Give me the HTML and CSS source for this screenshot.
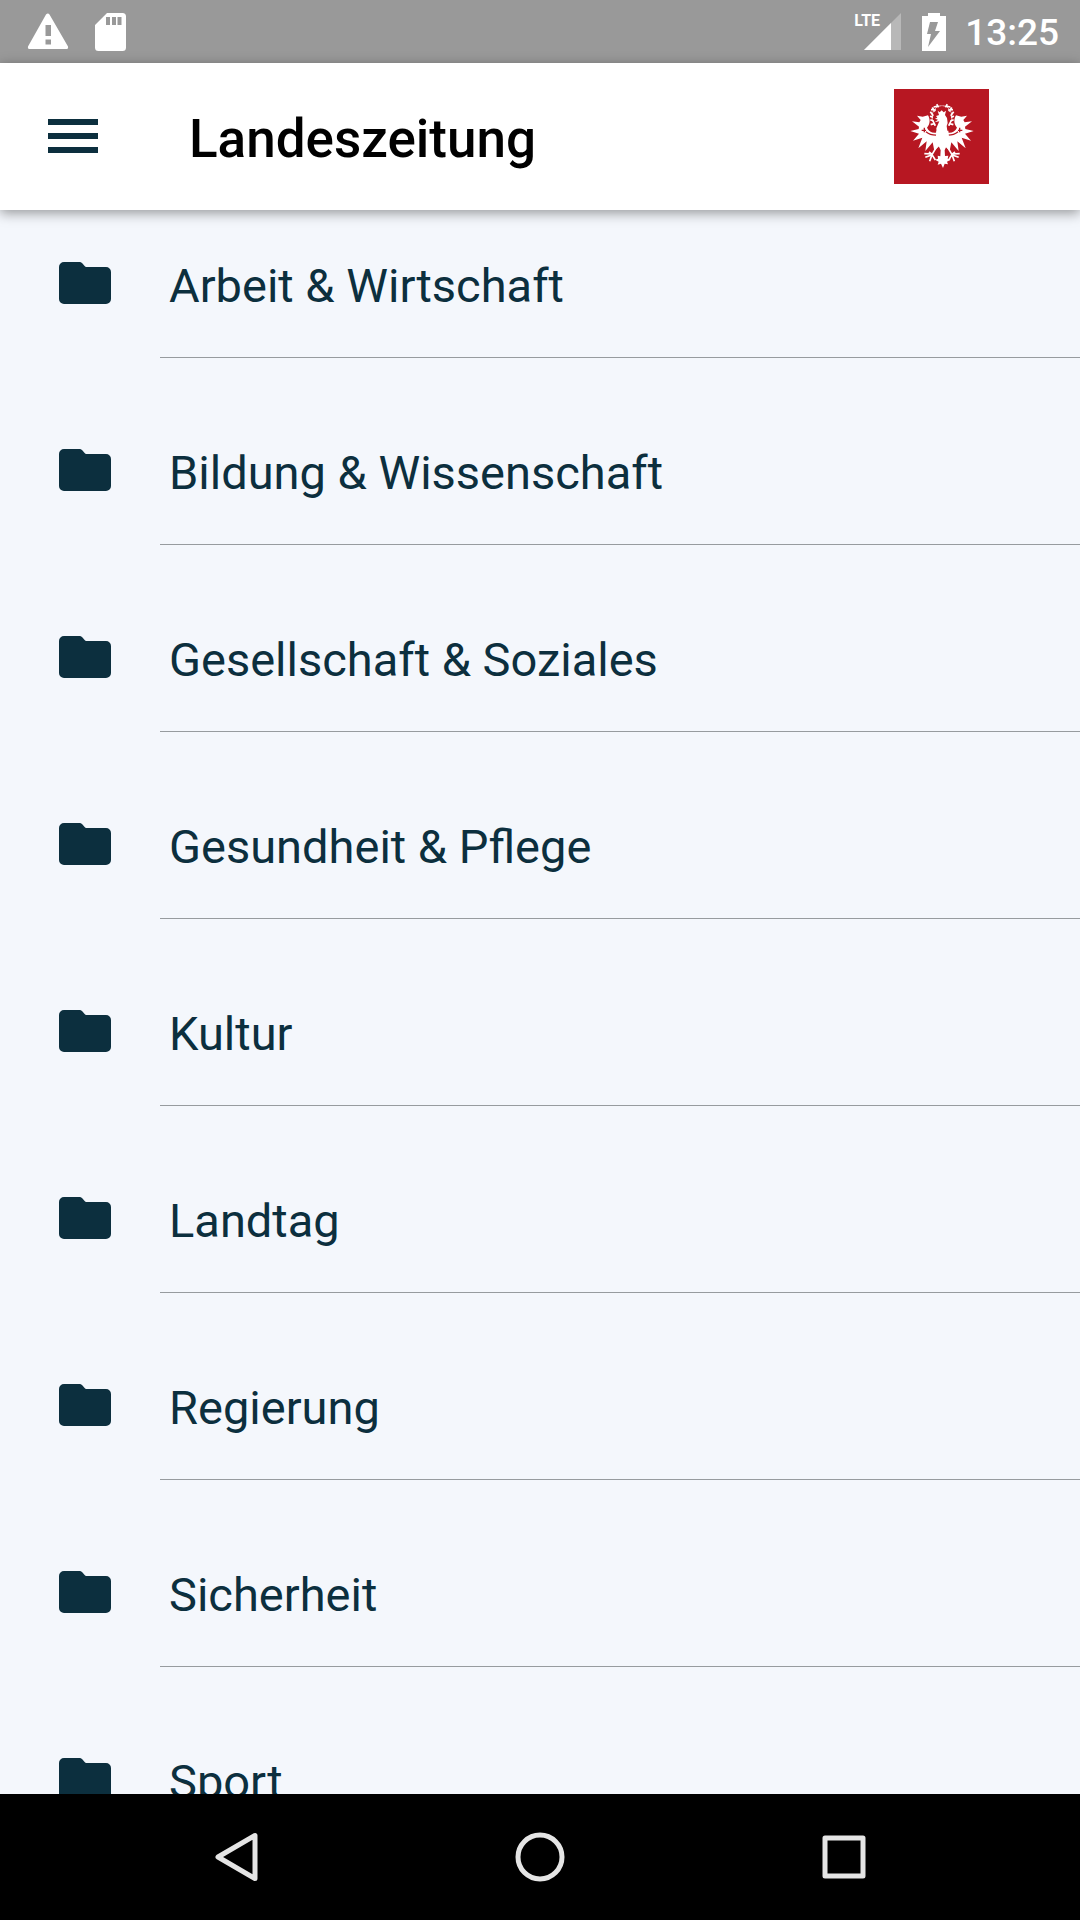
FILE: index.html
```html
<!DOCTYPE html>
<html lang="de">
<head>
    <meta charset="UTF-8">
    <meta name="viewport" content="width=device-width, initial-scale=1.0">
    <title>Landeszeitung</title>
    <link rel="stylesheet" href="styles.css">
</head>
<body>
    <!-- shared folder icon -->
    <svg class="sprite" aria-hidden="true">
        <symbol id="folder" viewBox="0 0 52 42">
            <path d="M5 0h16c2 0 5 5 6 5h20a5 5 0 0 1 5 5v27a5 5 0 0 1-5 5H5a5 5 0 0 1-5-5V5a5 5 0 0 1 5-5z"/>
        </symbol>
    </svg>

    <div class="status-bar">
        <svg class="status-icon" width="42" height="38" viewBox="0 0 42 38" aria-hidden="true">
            <path fill="#fff" fill-rule="evenodd" d="M19 1.500Q21 -.5 22.500 1.500L41 33.500Q41.500 36 39.500 36H2.500Q.5 36 1 33.500zM18.500 12v11h5.500V12zM18.500 26.500v5h5.500v-5z"/>
        </svg>
        <svg class="status-icon sd" width="32" height="38" viewBox="0 0 32 38" aria-hidden="true">
            <path fill="#fff" fill-rule="evenodd" d="M12 0h15.500a3.500 3.500 0 0 1 3.500 3.500v31a3.500 3.500 0 0 1-3.500 3.500h-24A3.500 3.500 0 0 1 0 34.500V12zM11 4v8h4V4zM17 4v8h4V4zM22.500 4v8h4V4z"/>
        </svg>
        <div class="status-right">
            <div class="signal">
                <span class="lte">LTE</span>
                <svg width="37" height="37" viewBox="0 0 37 37" aria-hidden="true">
                    <path fill="#b8b8b8" d="M37 0v37H0z"/>
                    <path fill="#fff" d="M27 10v27H0z"/>
                </svg>
            </div>
            <svg class="battery" width="24" height="38" viewBox="0 0 24 38" aria-hidden="true">
                <path fill="#fff" d="M6 0h12v3h6v35H0V3h6z"/>
                <path fill="#999" d="M8 9h8l-3 9h5L6 34l3-13H5z"/>
            </svg>
            <span class="clock">13:25</span>
        </div>
    </div>

    <header class="header">
        <button class="menu" aria-label="Menü">
            <svg width="50" height="36" viewBox="0 0 50 36">
                <path d="M0 0h50v6H0zM0 14h50v6H0zM0 28h50v6H0z"/>
            </svg>
        </button>
        <h1>Landeszeitung</h1>
        <a class="logo" href="#" aria-label="Land Tirol">
            <svg width="95" height="95" viewBox="27 27 285 285">
                <defs>
                    <g id="half">
                        <!-- wing -->
                        <path fill="#fff" d="M172 152h-9C150 164 134 158 126 143 137 131 135 116 129 106L113 110 96 107 107 120 103 127 81 124 102 140 101 147 76 153 102 161 84 182 112 173 100 205 125 184 121 213 143 187 148 212 172 190z"/>
                        <path fill="none" stroke="#b71722" stroke-width="4" d="M110 151h13M118 143v14M123 155q14 12 36 10"/>
                        <!-- leg and claws -->
                        <path fill="none" stroke="#fff" stroke-width="5" d="M158 195L141 224M142 222L118 221M142 224L121 232M141 224L134 244M141 224L151 240M132 216L142 224"/>
                        <!-- laurel leaves -->
                        <path fill="none" stroke="#fff" stroke-width="5" d="M160 78l-14 3M161 82l-6-9M153 90l-15-1M149 95l-7-13M145 107l-9-12M144 112l-9-3M146 123l-10-4M148 131l-11 3M151 137l-7-14"/>
                        <path fill="none" stroke="#fff" stroke-width="2" d="M170 77C150 78 138 97 142 120L150 138"/>
                    </g>
                </defs>
                <path fill="#b71722" d="M27 27h285v285H27z"/>
                <use href="#half"/>
                <use href="#half" transform="matrix(-1 0 0 1 342 0)"/>
                <g fill="#fff">
                    <!-- crown, head and neck -->
                    <path d="M158 92l6 5 6-6 6 6 7-5-3 13h-18zM153 108l12-4 15 1 6 9 2 15-3 9 3 22-33 3-1-18 5-12 4-9-14 3 10-8-9-3 7-3z"/>
                    <!-- body and tail -->
                    <path d="M154 152h36l3 27-14 32 1 17 10-1-2 9 9 3-11 6 3 8-10-2-5 13-6-13-10 3 3-9-11-6 9-3-1-9 8 2 1-18-15-31z"/>
                </g>
            </svg>
        </a>
    </header>

    <main class="content">
        <ul class="categories">
            <li><a href="#"><svg class="folder"><use href="#folder"/></svg><span>Arbeit &amp; Wirtschaft</span></a></li>
            <li><a href="#"><svg class="folder"><use href="#folder"/></svg><span>Bildung &amp; Wissenschaft</span></a></li>
            <li><a href="#"><svg class="folder"><use href="#folder"/></svg><span>Gesellschaft &amp; Soziales</span></a></li>
            <li><a href="#"><svg class="folder"><use href="#folder"/></svg><span>Gesundheit &amp; Pflege</span></a></li>
            <li><a href="#"><svg class="folder"><use href="#folder"/></svg><span>Kultur</span></a></li>
            <li><a href="#"><svg class="folder"><use href="#folder"/></svg><span>Landtag</span></a></li>
            <li><a href="#"><svg class="folder"><use href="#folder"/></svg><span>Regierung</span></a></li>
            <li><a href="#"><svg class="folder"><use href="#folder"/></svg><span>Sicherheit</span></a></li>
            <li><a href="#"><svg class="folder"><use href="#folder"/></svg><span>Sport</span></a></li>
        </ul>
    </main>

    <nav class="nav-bar">
        <button aria-label="Zurück">
            <svg width="50" height="50" viewBox="0 0 50 50">
                <path d="M44 3.500v43L7 25z"/>
            </svg>
        </button>
        <button aria-label="Startseite">
            <svg width="50" height="50" viewBox="0 0 50 50">
                <circle cx="25" cy="25" r="22"/>
            </svg>
        </button>
        <button aria-label="Übersicht">
            <svg width="50" height="50" viewBox="0 0 50 50">
                <path d="M6 6h38v38H6z"/>
            </svg>
        </button>
    </nav>
</body>
</html>
```
FILE: styles.css
```css
* {
    box-sizing: border-box;
}
body {
    display: flex;
    flex-direction: column;
    height: 100vh;
    margin: 0;
    background: #f4f7fc;
    color: #0c2f3e;
    font-family: Roboto, sans-serif;
}
button {
    display: flex;
    padding: 0;
    border: none;
    background: none;
    cursor: pointer;
}
svg {
    display: block;
    flex: none;
}
.sprite {
    position: absolute;
    width: 0;
    height: 0;
}

/* status bar */
.status-bar {
    display: flex;
    align-items: center;
    flex: none;
    height: 63px;
    padding: 0 21px 0 27px;
    background: #999;
    color: #fff;
}
.sd {
    margin-left: 26px;
}
.status-right {
    display: flex;
    align-items: center;
    margin-left: auto;
}
.signal {
    position: relative;
    margin-right: 21px;
}
.lte {
    position: absolute;
    top: 0;
    right: 21px;
    font-family: "Liberation Sans Narrow", Roboto, sans-serif;
    font-size: 16px;
    font-weight: 700;
    line-height: 16px;
}
.battery {
    margin-right: 19px;
}
.clock {
    padding-top: 3px;
    font-size: 37px;
    font-weight: 500;
    line-height: 44px;
}

/* toolbar */
.header {
    display: flex;
    align-items: center;
    flex: none;
    position: relative;
    z-index: 1;
    height: 147px;
    padding: 0 91px 0 48px;
    background: #fff;
    box-shadow: 0 3px 12px rgba(0, 0, 0, 0.4);
}
.menu svg {
    fill: #0c2f3e;
}
.header h1 {
    margin: 0 0 0 91px;
    padding-top: 4px;
    color: #000;
    font-size: 53px;
    font-weight: 500;
    line-height: 64px;
}
.logo {
    margin-left: auto;
}

/* category list */
.content {
    flex: 1;
    min-height: 0;
    overflow-y: auto;
    scrollbar-width: none;
}
.categories {
    display: flex;
    flex-direction: column;
    gap: 39px;
    margin: 0;
    padding: 0;
    list-style: none;
}
.categories a {
    display: flex;
    align-items: center;
    padding-left: 59px;
    color: inherit;
    text-decoration: none;
}
.folder {
    width: 52px;
    height: 42px;
    margin: 0 49px 2px 0;
    fill: #0c2f3e;
}
.categories span {
    flex: 1;
    padding: 48px 0 43px 9px;
    border-bottom: 1px solid #979b9f;
    font-size: 47px;
    line-height: 56px;
}

/* navigation bar */
.nav-bar {
    display: flex;
    align-items: center;
    justify-content: center;
    gap: 254px;
    flex: none;
    height: 126px;
    background: #000;
}
.nav-bar svg {
    fill: none;
    stroke: #e5e5e5;
    stroke-width: 5;
    stroke-linejoin: round;
}
```
